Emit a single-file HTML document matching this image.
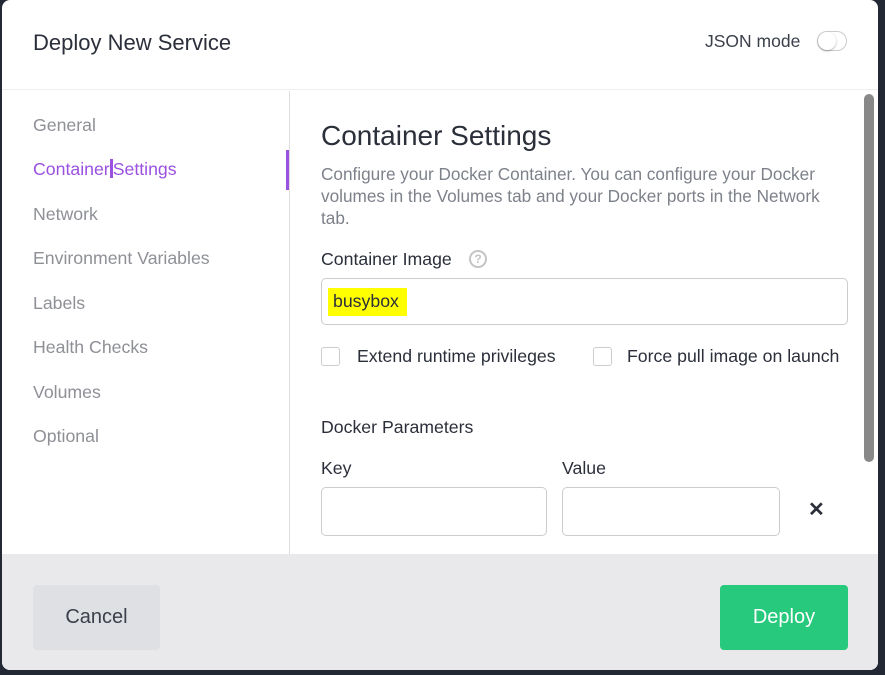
<!DOCTYPE html>
<html><head><style>
*{box-sizing:border-box;margin:0;padding:0}
body{width:885px;height:675px;background:#222834;font-family:"Liberation Sans",sans-serif;position:relative;overflow:hidden}
.m{position:absolute;left:2px;top:0;width:876px;height:670px;background:#fff;border-radius:8px;overflow:hidden}
.hd{position:absolute;left:0;top:0;width:100%;height:90px;border-bottom:1px solid #eee}
.t{position:absolute;left:31px;top:30px;font-size:22px;color:#2b2f3a}
.js{position:absolute;left:703px;top:31px;font-size:17.5px;color:#3a3f4a}
.tg{position:absolute;left:815px;top:31px;width:30px;height:20px;border:1px solid #ccc;border-radius:10px}
.tg:after{content:"";position:absolute;left:0;top:0;width:18px;height:18px;border-radius:50%;background:#fff;box-shadow:0 1px 2px rgba(0,0,0,.3)}
.sb{position:absolute;left:0;top:91px;width:288px;height:463px;border-right:1px solid #ddd}
.sb div{position:absolute;left:31px;font-size:17.7px;color:#8e9096}
.act{position:absolute;left:284px;top:150px;width:3px;height:40px;background:#9b51e0}
.c{position:absolute;left:319px}
.inp{position:absolute;border:1px solid #ccc;border-radius:5px;background:#fff}
.cb{position:absolute;width:19px;height:19px;border:1px solid #ccc;border-radius:3px}
.ft{position:absolute;left:0;top:554px;width:100%;height:116px;background:#e9e9ec}
.btn{position:absolute;top:31px;height:65px;border-radius:4px;font-size:20px;display:flex;align-items:center;justify-content:center}
.scr{position:absolute;left:862px;top:94px;width:10px;height:368px;border-radius:5px;background:#888}
.l{font-size:17.7px;color:#2b2f3a}
</style></head><body>
<div class="m">
<div class="hd"><div class="t">Deploy New Service</div><div class="js">JSON mode</div><div class="tg"></div></div>
<div class="sb">
<div style="top:24px">General</div>
<div style="top:68px;color:#9b51e0">Container<span style="display:inline-block;width:3px;height:19px;background:#9b51e0;vertical-align:-3px"></span>Settings</div>
<div style="top:113px">Network</div>
<div style="top:157px">Environment Variables</div>
<div style="top:202px">Labels</div>
<div style="top:246px">Health Checks</div>
<div style="top:291px">Volumes</div>
<div style="top:335px">Optional</div>
</div>
<div class="act"></div>
<div class="c" style="top:120px;font-size:28px;color:#2b2f3a">Container Settings</div>
<div class="c" style="top:163px;width:530px;font-size:17.2px;line-height:22px;color:#7d818a">Configure your Docker Container. You can configure your Docker volumes in the Volumes tab and your Docker ports in the Network tab.</div>
<div class="c l" style="top:249px">Container Image</div>
<div style="position:absolute;left:467px;top:250px;width:18px;height:18px;border:2px solid #c4c4c4;border-radius:50%;color:#c4c4c4;font-size:12px;font-weight:bold;text-align:center;line-height:14px">?</div>
<div class="inp" style="left:319px;top:278px;width:527px;height:47px"><span style="position:absolute;left:6px;top:9px;background:#ffff00;padding:3px 8px 4px 5px;font-size:17.7px;color:#2b2f3a">busybox</span></div>
<div class="cb" style="left:319px;top:347px"></div>
<div class="l" style="position:absolute;left:355px;top:346px">Extend runtime privileges</div>
<div class="cb" style="left:591px;top:347px"></div>
<div class="l" style="position:absolute;left:625px;top:346px">Force pull image on launch</div>
<div class="c l" style="top:417px">Docker Parameters</div>
<div class="c l" style="top:458px">Key</div>
<div class="l" style="position:absolute;left:560px;top:458px">Value</div>
<div class="inp" style="left:319px;top:487px;width:226px;height:49px"></div>
<div class="inp" style="left:560px;top:487px;width:218px;height:49px"></div>
<div style="position:absolute;left:806px;top:497px;font-size:20px;font-weight:bold;color:#2b2f3a">✕</div>
<div class="scr"></div>
<div class="ft">
<div class="btn" style="left:31px;width:127px;background:#dfe0e4;color:#3a3f4a">Cancel</div>
<div class="btn" style="left:718px;width:128px;background:#27c97c;color:#fff">Deploy</div>
</div>
</div>
</body></html>
